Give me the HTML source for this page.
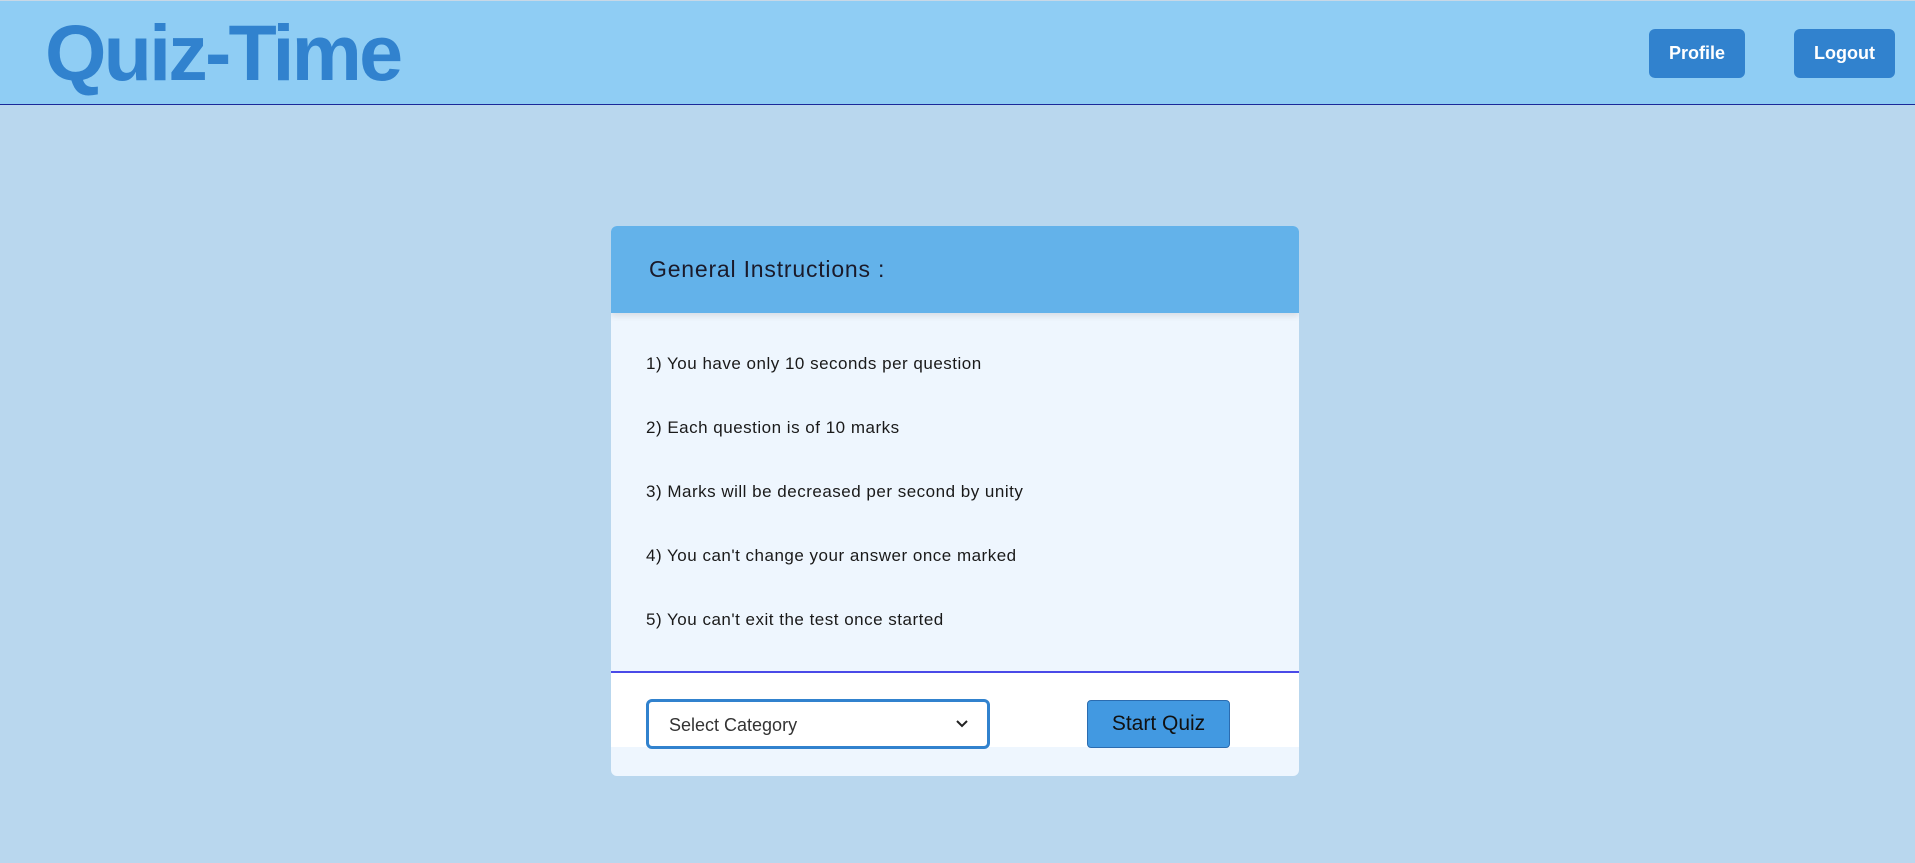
<!DOCTYPE html>
<html><head><style>
body{margin:0;width:1915px;height:863px;background:#b9d7ee;font-family:"Liberation Sans",sans-serif;position:relative;overflow:hidden}
.nav{position:absolute;left:0;top:0;width:1915px;height:103px;background:#8fcdf4;border-top:1px solid #c8d8e6;border-bottom:1px solid #1a2a9a}
.logo{position:absolute;left:45px;top:12px;font-size:79px;font-weight:bold;color:#3182ce;letter-spacing:-2.8px;line-height:80px}
.nb{position:absolute;top:28px;height:49px;background:#3182ce;color:#fff;border-radius:6px;font-weight:bold;font-size:18px;line-height:49px;text-align:center}
.card{position:absolute;left:611px;top:226px;width:688px;height:550px;background:#eef6fe;border-radius:6px;overflow:hidden}
.ch{height:87px;background:#63b2ea;box-shadow:0 3px 6px rgba(0,0,0,.1);position:relative}
.ch span{position:absolute;left:38px;top:30px;font-size:23px;letter-spacing:0.8px;color:#1a1a2a}
.it{position:absolute;left:35px;font-size:17px;letter-spacing:0.5px;color:#1a1a1a}
.foot{position:absolute;left:0;top:445px;width:688px;height:74px;background:#fff;border-top:2px solid #4a4ae8}
.sel{position:absolute;left:35px;top:473px;width:338px;height:44px;border:3px solid #3182ce;border-radius:6px;background:#fff}
.sel span{position:absolute;left:20px;top:13px;font-size:18px;color:#333}
.sq{position:absolute;left:476px;top:474px;width:141px;height:46px;background:#4299e1;border:1px solid #2b6cb0;border-radius:4px;font-size:21px;line-height:46px;text-align:center;color:#111}
</style></head><body>
<div class="nav"><div class="logo">Quiz-Time</div>
<div class="nb" style="left:1649px;width:96px">Profile</div>
<div class="nb" style="left:1794px;width:101px">Logout</div></div>
<div class="card">
<div class="ch"><span>General Instructions :</span></div>
<div class="it" style="top:128px">1) You have only 10 seconds per question</div>
<div class="it" style="top:192px">2) Each question is of 10 marks</div>
<div class="it" style="top:256px">3) Marks will be decreased per second by unity</div>
<div class="it" style="top:320px">4) You can't change your answer once marked</div>
<div class="it" style="top:384px">5) You can't exit the test once started</div>
<div class="foot"></div>
<div class="sel"><span>Select Category</span><svg style="position:absolute;right:18px;top:17px" width="14" height="10" viewBox="0 0 14 10"><path d="M2 2l5 5 5-5" stroke="#222" stroke-width="2" fill="none"/></svg></div>
<div class="sq">Start Quiz</div>
</div>
</body></html>
